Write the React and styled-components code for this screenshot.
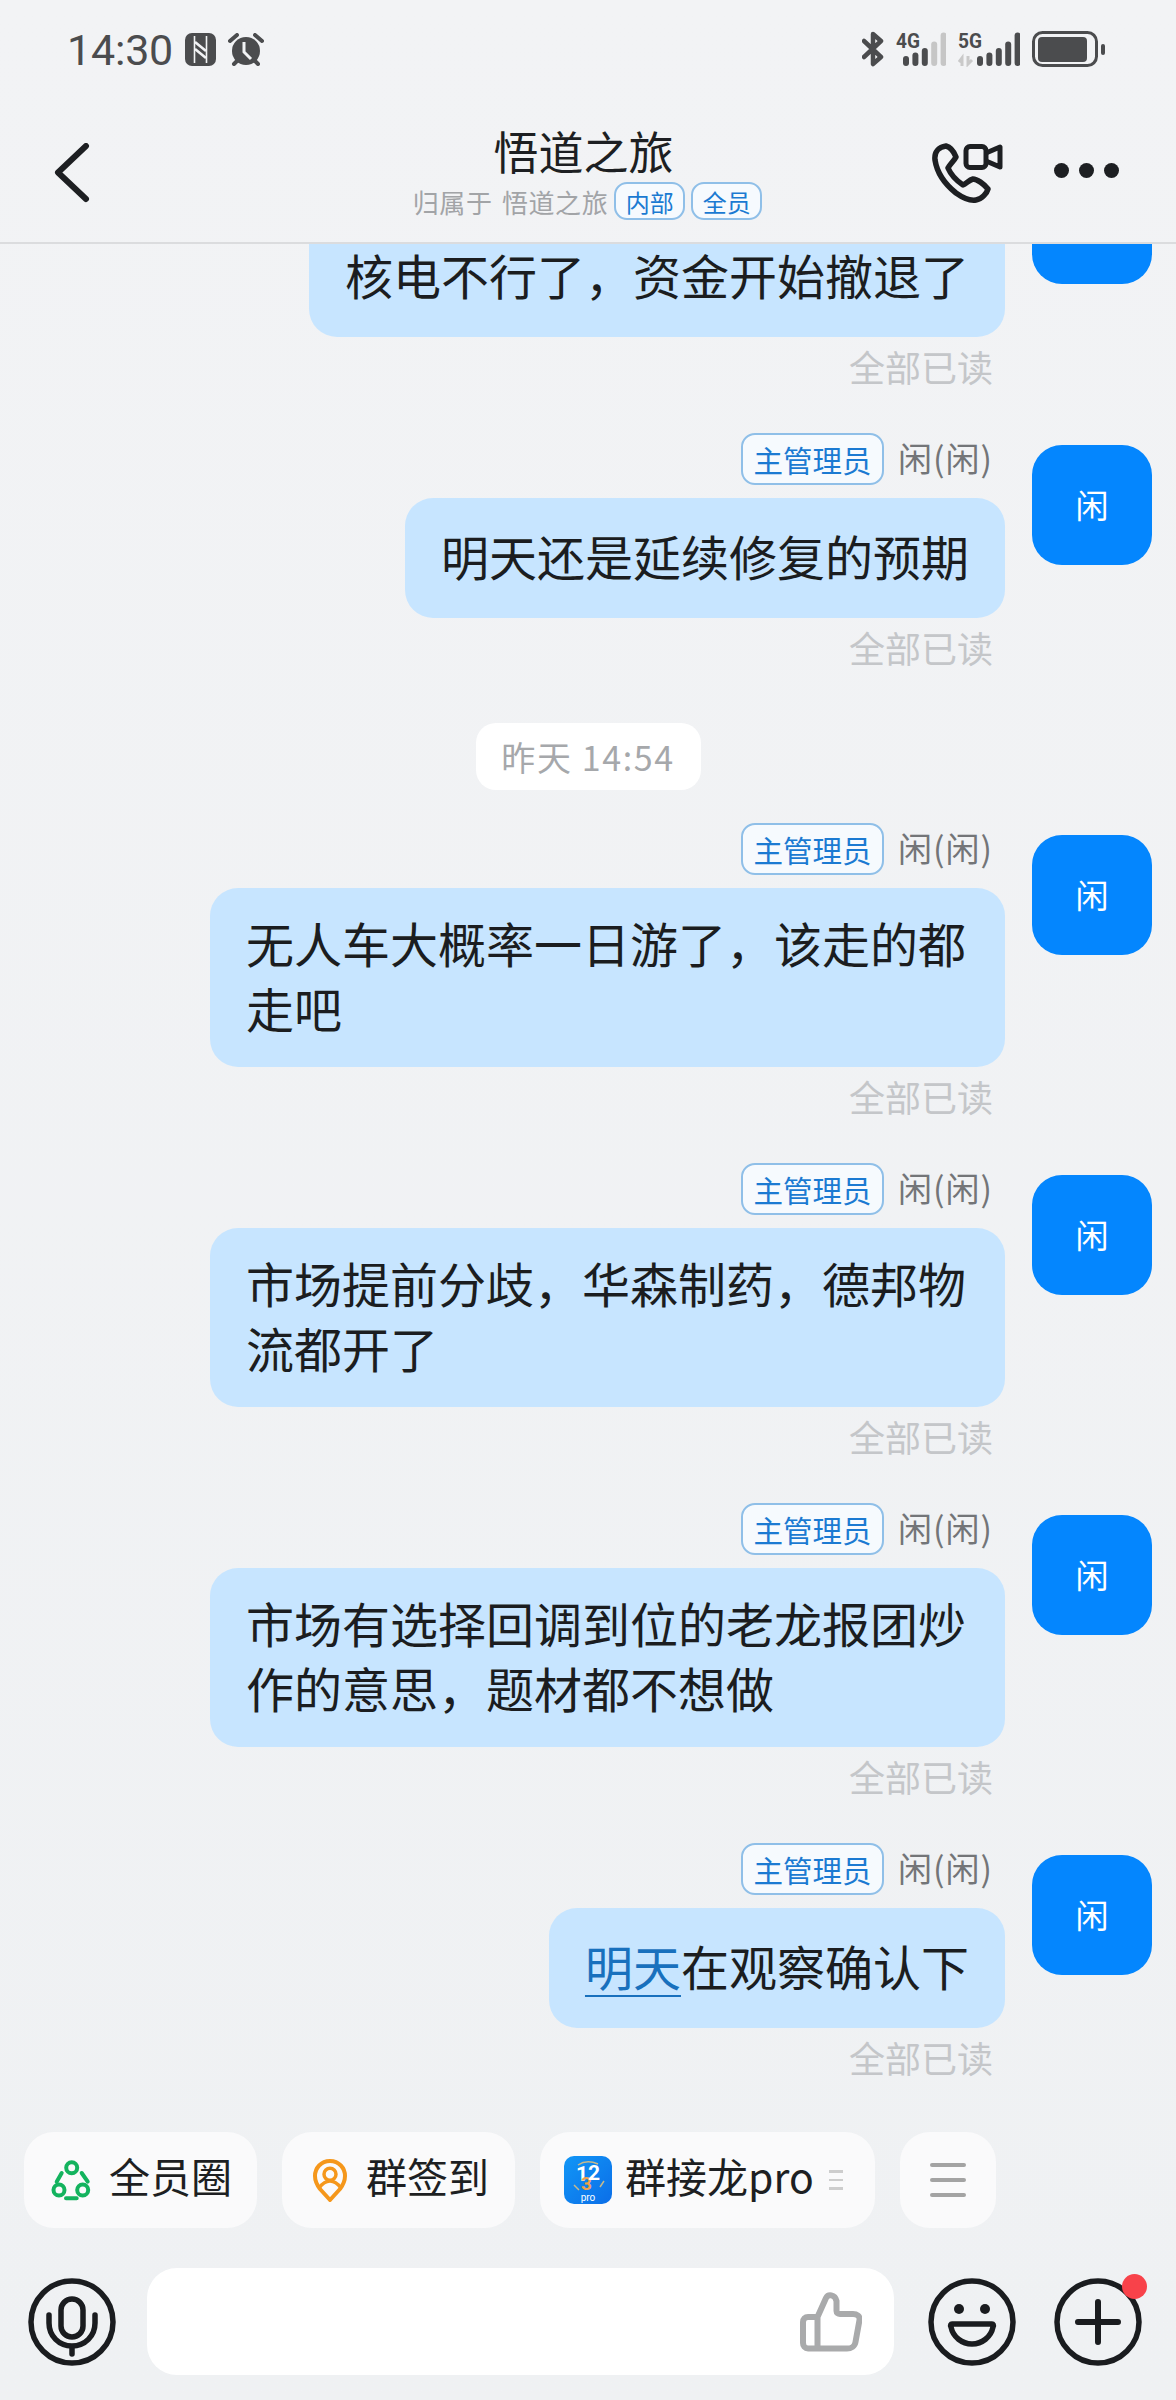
import React from 'react';
import styled, { createGlobalStyle } from 'styled-components';

const GlobalStyle = createGlobalStyle`
	html, body {
		margin: 0;
		padding: 0;
		background: #f1f3f5;
	}
	* {
		box-sizing: border-box;
	}
`;

const Page = styled.div`
	width: 1176px;
	height: 2400px;
	display: flex;
	flex-direction: column;
	overflow: hidden;
	background: linear-gradient(#f2f3f5, #eff1f3);
	font-family: "Noto Sans CJK SC", "Noto Sans", sans-serif;
	color: #1d1f22;
`;

const StatusBar = styled.div`
	height: 100px;
	padding: 31px 71px 0 67px;
	display: flex;
	justify-content: space-between;
	align-items: flex-start;
`;
const StatusGroup = styled.div`
	display: flex;
	align-items: flex-start;
`;
const Time = styled.span`
	font-family: Roboto, sans-serif;
	font-size: 43px;
	line-height: 38px;
	letter-spacing: -0.2px;
	color: #4b4c4e;
	margin-right: 12px;
`;
const StatusIcon = styled.svg`
	display: block;
	flex: none;
	margin-left: ${props => props.$left || 0}px;
	margin-top: ${props => props.$top || 0}px;
`;

const NavBar = styled.div`
	height: 144px;
	border-bottom: 2px solid #dbdcde;
	display: grid;
	grid-template-columns: 1fr auto 1fr;
	padding: 0 57px 0 54px;
`;
const BackSlot = styled.div`
	padding-top: 43px;
`;
const TitleBlock = styled.div`
	display: flex;
	flex-direction: column;
	align-items: center;
	padding-top: 22px;
`;
const Title = styled.div`
	font-size: 45px;
	line-height: 58px;
	margin-right: 6px;
`;
const SubRow = styled.div`
	display: flex;
	align-items: center;
	gap: 6px;
	height: 38px;
	margin-top: 2px;
	padding-left: 2px;
`;
const SubText = styled.span`
	font-size: 26px;
	letter-spacing: 0.6px;
	word-spacing: 3px;
	color: #a2a4a7;
`;
const SubTag = styled.span`
	width: 71px;
	height: 38px;
	border: 2px solid #8fbfe8;
	border-radius: 13px;
	background: #f6fafe;
	color: #1b7ad2;
	font-size: 24px;
	display: flex;
	align-items: center;
	justify-content: center;
`;
const NavActions = styled.div`
	display: flex;
	justify-content: flex-end;
	align-items: flex-start;
	gap: 50px;
	padding-top: 43px;
`;
const Dots = styled.div`
	display: flex;
	gap: 10px;
	padding-top: 20px;
`;
const Dot = styled.span`
	width: 15px;
	height: 15px;
	border-radius: 50%;
	background: #1d1f22;
`;

const ChatList = styled.div`
	flex: 1;
	min-height: 0;
	overflow: hidden;
`;
const ChatScroll = styled.div`
	margin-top: -92px;
`;
const Row = styled.div`
	display: flex;
	justify-content: flex-end;
	gap: 27px;
	padding-right: 24px;
	margin-bottom: 48px;
`;
const Content = styled.div`
	display: flex;
	flex-direction: column;
	align-items: flex-end;
`;
const NameRow = styled.div`
	height: 52px;
	display: flex;
	align-items: center;
	gap: 14px;
	padding-right: 12px;
	margin-bottom: 13px;
`;
const RoleTag = styled.span`
	width: 143px;
	height: 52px;
	border: 2px solid #8fbfe8;
	border-radius: 14px;
	background: #f6fafe;
	color: #1b7ad2;
	font-size: 29.5px;
	display: flex;
	align-items: center;
	justify-content: center;
`;
const Name = styled.span`
	font-size: 34px;
	letter-spacing: 1px;
	color: #737578;
	margin-top: -4px;
`;
const Bubble = styled.div`
	max-width: 795px;
	min-height: 120px;
	padding: 22px 36px 27px;
	display: flex;
	align-items: center;
	border-radius: 28px;
	background: #c7e5ff;
	font-size: 48px;
	line-height: 65px;
	color: #1b1d20;
`;
const Link = styled.span`
	color: #1870bd;
	text-decoration: underline;
	text-decoration-thickness: 2px;
	text-underline-offset: 9px;
`;
const ReadMark = styled.div`
	font-size: 36px;
	line-height: 38px;
	margin-top: 10px;
	padding-right: 12px;
	color: #c4c6c9;
`;
const Avatar = styled.div`
	width: 120px;
	height: 120px;
	margin-top: 12px;
	padding-bottom: 2px;
	border-radius: 30px;
	background: #0486fe;
	color: #fff;
	font-size: 33px;
	display: flex;
	align-items: center;
	justify-content: center;
`;
const TimePill = styled.div`
	width: 225px;
	height: 67px;
	margin: 57px auto 33px;
	border-radius: 20px;
	background: #fff;
	color: #a6a8ab;
	font-size: 34px;
	letter-spacing: 1.6px;
	display: flex;
	align-items: center;
	justify-content: center;
`;

const Bottom = styled.div`
	height: 268px;
	flex: none;
`;
const ChipBar = styled.div`
	display: flex;
	gap: 25px;
	padding-left: 24px;
	height: 96px;
	margin-bottom: 40px;
`;
const Chip = styled.div`
	width: ${props => props.$width}px;
	height: 96px;
	padding-left: ${props => props.$pad}px;
	border-radius: 30px;
	background: #fafafb;
	display: flex;
	align-items: center;
	gap: ${props => props.$gap}px;
	font-size: 41px;
`;
const ChipText = styled.span`
	line-height: 56px;
	margin-top: -10px;
`;
const MenuChip = styled.div`
	width: 96px;
	height: 96px;
	border-radius: 30px;
	background: #fafafb;
	display: flex;
	flex-direction: column;
	align-items: center;
	justify-content: center;
	gap: 11px;
`;
const MenuLine = styled.span`
	width: 36px;
	height: 4px;
	border-radius: 2px;
	background: #a3a3a3;
`;
const Handle = styled.div`
	display: flex;
	flex-direction: column;
	gap: 6px;
	margin-left: 2px;
`;
const HandleLine = styled.span`
	width: 14px;
	height: 2.5px;
	background: #cdcdcd;
`;
const Composer = styled.div`
	display: flex;
	align-items: center;
	height: 107px;
	padding-left: 28px;
`;
const InputBox = styled.div`
	width: 747px;
	height: 107px;
	margin: 0 34px 0 31px;
	padding-right: 32px;
	border-radius: 30px;
	background: #fff;
	display: flex;
	align-items: center;
	justify-content: flex-end;
`;
const PlusWrap = styled.div`
	position: relative;
	margin-left: 38px;
`;
const RedDot = styled.span`
	position: absolute;
	top: -4px;
	right: -5px;
	width: 25px;
	height: 25px;
	border-radius: 50%;
	background: #f8424a;
`;

const StatusLeftIcons = () => (
	<>
		<StatusIcon $top={2} width="31" height="33" viewBox="0 0 31 33">
			<rect width="31" height="33" rx="7" fill="#4b4c4e" />
			<path d="M9.500 3v27M21.500 3v27" stroke="#f2f3f5" strokeWidth="1.600" />
			<path d="M10 9l11 9M10 16l11 9" stroke="#f2f3f5" strokeWidth="2.600" />
		</StatusIcon>
		<StatusIcon $left={12} $top={2} width="36" height="33" viewBox="0 0 36 33">
			<circle cx="18" cy="18" r="14" fill="#4b4c4e" />
			<path d="M16 9v10l7 7" stroke="#f2f3f5" strokeWidth="3" fill="none" />
			<path d="M2 8l7-6M34 8l-7-6M6 31l4-4M30 31l-4-4" stroke="#4b4c4e" strokeWidth="4" strokeLinecap="round" />
		</StatusIcon>
	</>
);

const bars = [10, 13.5, 18, 24.5, 33.5];

const SignalIcon = ({ label, arrows, lightFrom }) => (
	<StatusIcon $left={12} width={arrows ? 62 : 50} height="36" viewBox={arrows ? '0 0 62 36' : '0 0 50 36'}>
		<text x="0" y="17" fontFamily="Roboto, sans-serif" fontWeight="700" fontSize="21" textLength="24" lengthAdjust="spacingAndGlyphs" fill="#4b4c4e">{label}</text>
		{arrows && <path d="M4 35V27l-3 4M10 25v8l4-4" stroke="#c9c9c9" strokeWidth="3" fill="none" />}
		{bars.map((h, i) => (
			<rect key={h} x={(arrows ? 19 : 7) + i * 9.4} y={35 - h} width="6" height={h} rx="3" fill={i >= lightFrom ? '#c6c6c6' : '#4b4c4e'} />
		))}
	</StatusIcon>
);

const Bluetooth = () => (
	<StatusIcon width="22" height="36" viewBox="0 0 22 36">
		<path d="M2 10l17 16-8 7V3l8 7L2 26" fill="none" stroke="#4b4c4e" strokeWidth="4.500" strokeLinejoin="round" strokeLinecap="round" />
	</StatusIcon>
);

const Battery = () => (
	<StatusIcon $left={12} width="73" height="36" viewBox="0 0 73 36">
		<rect x="1.500" y="1.500" width="63" height="33" rx="9" fill="none" stroke="#4b4c4e" strokeWidth="3" />
		<rect x="6" y="6" width="49" height="25" rx="4" fill="#4b4c4e" />
		<rect x="69" y="13" width="4" height="11" rx="2" fill="#4b4c4e" />
	</StatusIcon>
);

const BackIcon = () => (
	<svg width="36" height="60" viewBox="0 0 36 60">
		<path d="M32 3L4 29.500 32 56" fill="none" stroke="#1d1f22" strokeWidth="6" strokeLinecap="round" strokeLinejoin="round" />
	</svg>
);

const CallIcon = () => (
	<svg width="72" height="60" viewBox="0 0 72 60">
		<path d="M14 3C7 4 2 9 3 17c2 13 11 25 21 33 7 5 14 8 20 7 6-1 11-7 12-11-4-5-11-10-15-10-4 1-7 5-10 6-6-4-12-10-15-17 2-4 6-7 8-11-2-5-6-10-10-11z" fill="none" stroke="#1d1f22" strokeWidth="5.500" strokeLinejoin="round" />
		<rect x="34" y="3.500" width="20" height="21" rx="4" fill="none" stroke="#1d1f22" strokeWidth="5" />
		<path d="M54 10l14-6v20l-14-6" fill="none" stroke="#1d1f22" strokeWidth="5" strokeLinejoin="round" />
	</svg>
);

const CircleIcon = () => (
	<svg width="42" height="42" viewBox="0 0 42 42" style={{ flex: 'none' }}>
		<g fill="none" stroke="#13b35e" strokeWidth="4">
			<circle cx="20.700" cy="8.700" r="5.500" />
			<circle cx="8" cy="31" r="5.500" />
			<circle cx="31.700" cy="31" r="5.500" />
		</g>
		<path d="M10.700 14l-5 8.700M30.700 14l6 8.700M15 39.300h10.700" fill="none" stroke="#13b35e" strokeWidth="4" strokeLinecap="round" />
	</svg>
);

const PinIcon = () => (
	<svg width="34" height="43" viewBox="0 0 34 43" style={{ flex: 'none' }}>
		<path d="M17 2C8 2 2 9 2 17c0 5 2 9 5 13l10 11 10-11c3-4 5-8 5-13 0-8-6-15-15-15z" fill="none" stroke="#f5971b" strokeWidth="4" strokeLinejoin="round" />
		<circle cx="17" cy="15.300" r="6" fill="none" stroke="#f5971b" strokeWidth="3.500" />
		<path d="M6 29c3-4 7-7 11-7s8 3 11 7" fill="none" stroke="#f5971b" strokeWidth="3.500" />
	</svg>
);

const JielongIcon = () => (
	<svg width="48" height="48" viewBox="0 0 48 48" style={{ flex: 'none' }}>
		<defs>
			<linearGradient id="jielong" x1="0" y1="0" x2="1" y2="1">
				<stop offset="0" stopColor="#1196f6" />
				<stop offset="1" stopColor="#0b6ee8" />
			</linearGradient>
		</defs>
		<rect width="48" height="48" rx="10" fill="url(#jielong)" />
		<text x="12" y="25" fontFamily="Roboto, sans-serif" fontWeight="700" fontSize="21" fill="#fff">1</text>
		<text x="17" y="34" fontFamily="Roboto, sans-serif" fontWeight="700" fontSize="19" fill="#efa24a">3</text>
		<text x="24" y="24" fontFamily="Roboto, sans-serif" fontWeight="700" fontSize="21" fill="#fff">2</text>
		<path d="M14 9c6-4 13-4 20-1M40 25l-4 6M10 29l5 5" fill="none" stroke="#c6b98d" strokeWidth="1.500" />
		<text x="24" y="45" textAnchor="middle" fontFamily="Roboto, sans-serif" fontSize="10" fill="#fff">pro</text>
	</svg>
);

const MicIcon = () => (
	<svg width="88" height="88" viewBox="0 0 88 88" style={{ flex: 'none' }}>
		<g fill="none" stroke="#1a1c1f" strokeWidth="5.500" strokeLinecap="round">
			<circle cx="44" cy="44" r="41" />
			<rect x="33" y="21" width="22" height="38" rx="11" />
			<path d="M21 37v8c0 13 10 23 23 23s23-10 23-23v-8M44 68v8" />
		</g>
	</svg>
);

const ThumbIcon = () => (
	<svg width="62" height="60" viewBox="0 0 62 60">
		<path d="M17.500 25L26 6c2-4 9-4 10.500 3v10c0 2 1.500 3 3.500 3h13c4 0 7 2 6.500 6l-4 22c-.5 4-4.500 6.500-8.500 6.500H8c-3 0-5-2.500-5-5.500V30c0-3 2-5 5-5h9.500v31.500" fill="none" stroke="#a9aaab" strokeWidth="6" strokeLinejoin="round" />
	</svg>
);

const SmileIcon = () => (
	<svg width="88" height="88" viewBox="0 0 88 88" style={{ flex: 'none' }}>
		<circle cx="44" cy="44" r="41" fill="none" stroke="#1a1c1f" strokeWidth="5.500" />
		<circle cx="31" cy="31" r="5" fill="#1a1c1f" />
		<circle cx="57" cy="31" r="5" fill="#1a1c1f" />
		<path d="M24 46h40c1 0 2 1 1 3-2 10-11 17-21 17s-19-7-21-17c-1-2 0-3 1-3z" fill="none" stroke="#1a1c1f" strokeWidth="5.500" strokeLinejoin="round" />
	</svg>
);

const PlusIcon = () => (
	<svg width="88" height="88" viewBox="0 0 88 88" style={{ display: 'block' }}>
		<g fill="none" stroke="#1a1c1f" strokeLinecap="round">
			<circle cx="44" cy="44" r="41" strokeWidth="5.500" />
			<path d="M24 44h40M44 24v40" strokeWidth="6" />
		</g>
	</svg>
);

const Message = ({ children }) => (
	<Row>
		<Content>
			<NameRow>
				<RoleTag>主管理员</RoleTag>
				<Name>闲(闲)</Name>
			</NameRow>
			<Bubble><div>{children}</div></Bubble>
			<ReadMark>全部已读</ReadMark>
		</Content>
		<Avatar>闲</Avatar>
	</Row>
);

export default function App() {
	return (
		<Page>
			<GlobalStyle />
			<StatusBar>
				<StatusGroup>
					<Time>14:30</Time>
					<StatusLeftIcons />
				</StatusGroup>
				<StatusGroup>
					<Bluetooth />
					<SignalIcon label="4G" lightFrom={3} />
					<SignalIcon label="5G" arrows lightFrom={5} />
					<Battery />
				</StatusGroup>
			</StatusBar>
			<NavBar>
				<BackSlot><BackIcon /></BackSlot>
				<TitleBlock>
					<Title>悟道之旅</Title>
					<SubRow>
						<SubText>归属于 悟道之旅</SubText>
						<SubTag>内部</SubTag>
						<SubTag>全员</SubTag>
					</SubRow>
				</TitleBlock>
				<NavActions>
					<CallIcon />
					<Dots><Dot /><Dot /><Dot /></Dots>
				</NavActions>
			</NavBar>
			<ChatList>
				<ChatScroll>
					<Message>核电不行了，资金开始撤退了</Message>
					<Message>明天还是延续修复的预期</Message>
					<TimePill>昨天 14:54</TimePill>
					<Message>无人车大概率一日游了，该走的都走吧</Message>
					<Message>市场提前分歧，华森制药，德邦物流都开了</Message>
					<Message>市场有选择回调到位的老龙报团炒作的意思，题材都不想做</Message>
					<Message><Link>明天</Link>在观察确认下</Message>
				</ChatScroll>
			</ChatList>
			<Bottom>
				<ChipBar>
					<Chip $width={233} $pad={27} $gap={16}><CircleIcon /><ChipText>全员圈</ChipText></Chip>
					<Chip $width={233} $pad={31} $gap={19}><PinIcon /><ChipText>群签到</ChipText></Chip>
					<Chip $width={335} $pad={24} $gap={13}>
						<JielongIcon />
						<ChipText>群接龙pro</ChipText>
						<Handle><HandleLine /><HandleLine /><HandleLine /></Handle>
					</Chip>
					<MenuChip><MenuLine /><MenuLine /><MenuLine /></MenuChip>
				</ChipBar>
				<Composer>
					<MicIcon />
					<InputBox><ThumbIcon /></InputBox>
					<SmileIcon />
					<PlusWrap><PlusIcon /><RedDot /></PlusWrap>
				</Composer>
			</Bottom>
		</Page>
	);
}
